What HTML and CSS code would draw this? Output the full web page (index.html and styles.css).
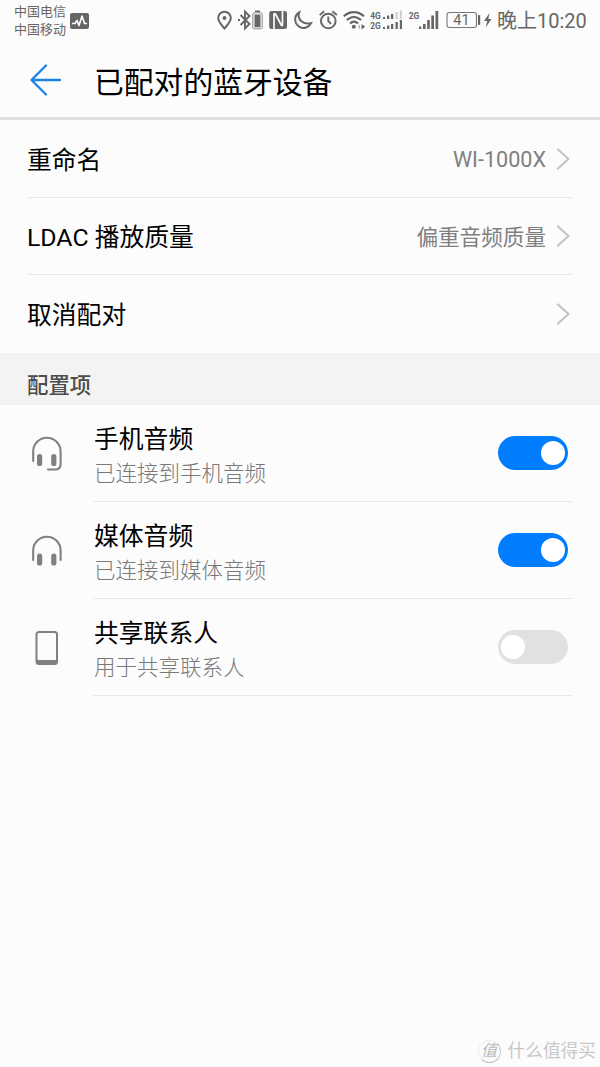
FILE: index.html
```
<!DOCTYPE html>
<html lang="zh-CN">
<head>
  <meta charset="UTF-8">
  <meta name="viewport" content="width=device-width, initial-scale=1.0">
  <title>已配对的蓝牙设备</title>
  <link rel="stylesheet" href="styles.css">
</head>
<body>
<div class="page">
  <!-- 状态栏 -->
  <div class="status-bar">
    <div class="carriers">
      <div>中国电信</div>
      <div>中国移动</div>
    </div>
    <svg class="pulse" width="19" height="16" viewBox="0 0 19 16">
      <rect width="19" height="16" rx="2" fill="#666"/>
      <path d="M2 10.500h3l2-3 2 5 3-9.500 2.500 7.500H17" fill="none" stroke="#fff" stroke-width="1.600" stroke-linejoin="round"/>
    </svg>
    <svg class="status-icons" width="276" height="24" viewBox="216 8 276 24" fill="none" stroke="#666" stroke-width="2">
      <!-- 定位 -->
      <path d="M224.500 28.500c-3.500-4.200-6.300-7-6.300-10.500a6.300 6.300 0 0 1 12.600 0c0 3.500-2.800 6.300-6.300 10.500z"/>
      <circle cx="224.500" cy="18" r="2" fill="#666" stroke="none"/>
      <!-- 蓝牙 -->
      <path d="M240.500 15l9 9-4.500 4.500v-17l4.500 4.500-9 9" stroke-width="1.900"/>
      <path d="M238 19h2v2h-2z" fill="#666" stroke="none"/>
      <rect x="252.800" y="12.800" width="9.400" height="16" rx="1.500" stroke="#888" stroke-width="1"/>
      <path d="M254.500 14.500h6v12.700h-6zM255 10.500h5v1.500h-5z" fill="#666" stroke="none"/>
      <!-- NFC -->
      <rect x="269.200" y="11" width="17.800" height="18" rx="2.500" fill="#666" stroke="none"/>
      <path d="M274 29V14.500q0-2 1.700 0l5.300 10q1.500 2.500 1.500-.5V11" stroke="#fcfcfc" stroke-width="1.700"/>
      <!-- 勿扰 -->
      <path d="M299.200 12.500c-5.500 3-5.300 11 .3 14.400 4.500 2.500 9.300.5 11.500-3.700-8 1.800-14.300-4-11.800-10.700z"/>
      <!-- 闹钟 -->
      <circle cx="328.300" cy="21" r="7.300"/>
      <path d="M328.300 16.500V21l2.800 2.800M319.700 15l4.500-3.700M336.900 15l-4.500-3.700" stroke-width="1.900"/>
      <!-- WLAN -->
      <path d="M343.800 16.300c6-5.600 14-5.600 20.200 0M346.800 20c4.500-4 9.800-4 14.300 0M350 23.500c2.500-2.300 5.500-2.300 8 0" stroke-width="2.200"/>
      <circle cx="353.800" cy="26.800" r="2" fill="#666" stroke="none"/>
      <path d="M361.500 24v5.500l3.700-2.700z" fill="#666" stroke="none"/>
      <path d="M360 24v5.500l-2.200-2.700z" fill="#bbb" stroke="none"/>
      <!-- 信号 -->
      <g class="net" fill="#666" stroke="none">
        <text x="370.300" y="18.700" textLength="10.500" lengthAdjust="spacingAndGlyphs">4G</text>
        <text x="370.300" y="29.200" textLength="10.500" lengthAdjust="spacingAndGlyphs">2G</text>
        <text x="408.800" y="18.700" textLength="10.500" lengthAdjust="spacingAndGlyphs">2G</text>
        <path d="M383 17h2v2h-2zM387 15.500h2.300V19H387zM391 14h2.300v5H391z"/>
        <path d="M395.500 12h2.300v7h-2.300zM399.800 10.500h2.200V19h-2.200z" fill="#d0d0d0"/>
        <path d="M383 27h2v2h-2zM387 25.500h2.300V29H387zM391 24h2.300v5H391zM395.500 22h2.300v7h-2.300zM399.800 20h2.200v9h-2.200z"/>
        <path d="M419 26.500h2.300V29H419zM423 24h2.600v5H423zM427.200 20h2.600v9h-2.600zM431.300 15.500h2.700V29h-2.700zM435.500 11h2.700v18h-2.700z"/>
      </g>
      <!-- 电池 -->
      <rect x="447" y="12.500" width="29.500" height="15" rx="2.500" stroke="#777" stroke-width="1.100"/>
      <text class="battery" x="461.500" y="25.400" fill="#666" stroke="none" text-anchor="middle">41</text>
      <path d="M478 15.200h2.200v9.600H478z" fill="#666" stroke="none"/>
      <path d="M489.500 13l-5.500 8h3.200l-1.400 6.300 5.700-8.300h-3.200z" fill="#666" stroke="none"/>
    </svg>
    <div class="time">晚上10:20</div>
  </div>

  <header class="header">
    <svg class="back" width="32" height="32" viewBox="0 0 32 32">
      <path d="M16 1.500L1.500 16 16 30.500M1.500 16H30" fill="none" stroke="#1a82e8" stroke-width="2.300" stroke-linecap="round" stroke-linejoin="round"/>
    </svg>
    <h1>已配对的蓝牙设备</h1>
  </header>

  <ul class="list">
    <li class="row">
      <span class="label">重命名</span>
      <span class="value model">WI-1000X</span>
      <svg class="arrow" viewBox="0 0 14 22"><path d="M2 1.500L12.500 11 2 20.500"/></svg>
    </li>
    <li class="row">
      <span class="label">LDAC 播放质量</span>
      <span class="value">偏重音频质量</span>
      <svg class="arrow" viewBox="0 0 14 22"><path d="M2 1.500L12.500 11 2 20.500"/></svg>
    </li>
    <li class="row">
      <span class="label">取消配对</span>
      <svg class="arrow" viewBox="0 0 14 22"><path d="M2 1.500L12.500 11 2 20.500"/></svg>
    </li>
  </ul>

  <h2 class="section-title">配置项</h2>

  <ul class="profiles">
    <li class="profile">
      <svg class="profile-icon" viewBox="0 0 32 36">
        <path d="M2.200 25V15.500a13.700 13.700 0 0 1 27.400 0V28q0 5.500-5.500 5.500H17" fill="none" stroke="#808080" stroke-width="2.100" stroke-linecap="round"/>
        <rect x="6" y="18" width="5.200" height="12" rx="2.600" fill="#808080"/>
        <rect x="20.200" y="18" width="5.200" height="12" rx="2.600" fill="#808080"/>
      </svg>
      <div class="profile-body">
        <div class="profile-text">
          <div class="name">手机音频</div>
          <div class="desc">已连接到手机音频</div>
        </div>
        <div class="switch on"></div>
      </div>
    </li>
    <li class="profile">
      <svg class="profile-icon" viewBox="0 0 32 36">
        <path d="M2.200 27V17.500a13.700 13.700 0 0 1 27.400 0V27" fill="none" stroke="#808080" stroke-width="2.100" stroke-linecap="round"/>
        <rect x="6" y="20.500" width="5.200" height="12" rx="2.600" fill="#808080"/>
        <rect x="20.200" y="20.500" width="5.200" height="12" rx="2.600" fill="#808080"/>
      </svg>
      <div class="profile-body">
        <div class="profile-text">
          <div class="name">媒体音频</div>
          <div class="desc">已连接到媒体音频</div>
        </div>
        <div class="switch on"></div>
      </div>
    </li>
    <li class="profile">
      <svg class="profile-icon" viewBox="0 0 32 36">
        <rect x="5.500" y="2" width="20.500" height="32" rx="2.500" fill="none" stroke="#808080" stroke-width="2"/>
        <path d="M5.500 30H26v2.500q0 2-2 2H7.500q-2 0-2-2z" fill="#808080"/>
      </svg>
      <div class="profile-body">
        <div class="profile-text">
          <div class="name">共享联系人</div>
          <div class="desc">用于共享联系人</div>
        </div>
        <div class="switch"></div>
      </div>
    </li>
  </ul>

  <!-- 水印 -->
  <footer class="watermark">
    <span class="logo">值</span>
    <span>什么值得买</span>
  </footer>
</div>
</body>
</html>
```
FILE: styles.css
```
* {
  box-sizing: border-box;
}
body {
  margin: 0;
  background: #fcfcfc;
  color: #000;
  font-family: Roboto, "Noto Sans CJK SC", sans-serif;
}
ul {
  margin: 0;
  padding: 0;
  list-style: none;
}
h1, h2 {
  margin: 0;
  font-weight: 400;
}
.page {
  display: flex;
  flex-direction: column;
  height: 1067px;
  overflow: hidden;
}
.status-bar {
  display: flex;
  align-items: center;
  height: 40px;
  padding: 0 13px 0 14px;
  color: #666;
}
.carriers {
  width: 56px;
  font-size: 13px;
  line-height: 18px;
  white-space: nowrap;
  padding-top: 2px;
}
.pulse {
  margin-top: 1px;
}
.status-icons {
  margin-left: 127px;
}
.net {
  font-size: 9px;
  font-weight: 700;
}
.battery {
  font-size: 14.5px;
}
.time {
  margin-left: 5px;
  padding-top: 2px;
  font-size: 20px;
  line-height: 38px;
  white-space: nowrap;
}
.header {
  display: flex;
  align-items: center;
  height: 80px;
  padding: 0 30px 0;
  border-bottom: 3px solid #e1e1e1;
}
.back {
  margin-top: 3px;
}
.header h1 {
  margin-left: 32px;
  padding-top: 8px;
  font-size: 29.8px;
  line-height: 40px;
}
.row {
  display: flex;
  align-items: center;
  height: 78px;
  margin: 0 27px;
  border-bottom: 1px solid #e8e8e8;
}
.row:nth-child(2) {
  height: 77px;
}
.row:last-child {
  border-bottom: none;
}
.label {
  flex: 1;
  padding-bottom: 2px;
  font-size: 24.8px;
}
.value {
  padding-bottom: 2px;
  color: #808080;
  font-size: 21.6px;
}
.model {
  padding: 1px 0 0;
}
.arrow {
  width: 14px;
  height: 22px;
  margin: 0 3px 0 10px;
  fill: none;
  stroke: #c4c4c4;
  stroke-width: 2.2;
  stroke-linecap: round;
  stroke-linejoin: round;
}
.section-title {
  height: 52px;
  padding: 7px 27px 0;
  background: #f3f3f3;
  color: #4c4c4c;
  font-size: 21.4px;
  font-weight: 500;
  line-height: 52px;
}
.profile {
  display: flex;
  align-items: center;
  height: 97px;
  padding: 0 27px 0 31px;
}
.profile-icon {
  width: 32px;
  height: 36px;
}
.profile-body {
  flex: 1;
  display: flex;
  align-items: center;
  justify-content: space-between;
  height: 97px;
  margin-left: 30px;
  padding-right: 5px;
  border-bottom: 1px solid #e8e8e8;
}
.profile-text {
  padding: 6px 0 0 1px;
}
.name {
  font-size: 24.8px;
  line-height: 36px;
}
.desc {
  color: #787878;
  font-size: 21.5px;
  font-weight: 300;
  line-height: 32px;
}
.switch {
  display: flex;
  align-items: center;
  width: 70px;
  height: 34px;
  padding: 0 3px;
  border-radius: 17px;
  background: #e1e1e1;
}
.switch::before {
  content: "";
  width: 24px;
  height: 24px;
  border-radius: 50%;
  background: #fff;
}
.switch.on {
  justify-content: flex-end;
  background: #007dff;
}
.watermark {
  display: flex;
  align-items: center;
  justify-content: flex-end;
  margin-top: auto;
  padding: 0 4px 4px 0;
  color: #c8c8c8;
  font-size: 17.7px;
  line-height: 24px;
}
.logo {
  width: 23px;
  height: 23px;
  margin-right: 7px;
  border: 1px solid #c8c8c8;
  border-top-color: #eee;
  border-left-color: #eee;
  border-radius: 50%;
  color: #bbb;
  font-size: 16px;
  font-style: italic;
  line-height: 20px;
  text-align: center;
}
```
